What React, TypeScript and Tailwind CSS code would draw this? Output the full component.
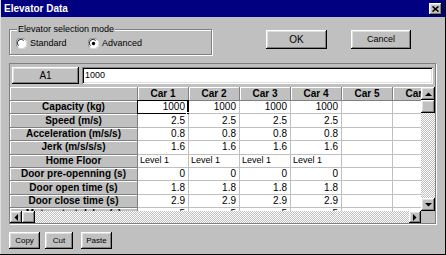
import React from "react";

const raised =
  "bg-[#c0c0c0] shadow-[inset_-1px_-1px_0_#000,inset_1px_1px_0_#fff,inset_-2px_-2px_0_#808080,inset_2px_2px_0_#dfdfdf]";
const sunken =
  "shadow-[inset_1px_1px_0_#808080,inset_-1px_-1px_0_#fff,inset_2px_2px_0_#000,inset_-2px_-2px_0_#dfdfdf]";
const checker =
  "bg-[image:repeating-conic-gradient(#c0c0c0_0%_25%,#ffffff_0%_50%)] bg-[length:2px_2px]";

type Row = { label: string; values: string[]; left?: boolean };

const rows: Row[] = [
  { label: "Capacity (kg)", values: ["1000", "1000", "1000", "1000", "", ""] },
  { label: "Speed (m/s)", values: ["2.5", "2.5", "2.5", "2.5", "", ""] },
  { label: "Acceleration (m/s/s)", values: ["0.8", "0.8", "0.8", "0.8", "", ""] },
  { label: "Jerk (m/s/s/s)", values: ["1.6", "1.6", "1.6", "1.6", "", ""] },
  { label: "Home Floor", values: ["Level 1", "Level 1", "Level 1", "Level 1", "", ""], left: true },
  { label: "Door pre-openning (s)", values: ["0", "0", "0", "0", "", ""] },
  { label: "Door open time (s)", values: ["1.8", "1.8", "1.8", "1.8", "", ""] },
  { label: "Door close time (s)", values: ["2.9", "2.9", "2.9", "2.9", "", ""] },
  { label: "Motor start delay (s)", values: ["5", "5", "5", "5", "", ""] },
];

const cars = ["Car 1", "Car 2", "Car 3", "Car 4", "Car 5", "Car 6"];

function Arrow({ dir }: { dir: "up" | "down" | "left" | "right" }) {
  const pts =
    dir === "up"
      ? "0,4 7,4 3.5,0.5"
      : dir === "down"
      ? "0,0 7,0 3.5,3.5"
      : dir === "left"
      ? "4,0 4,7 0.5,3.5"
      : "0,0 0,7 3.5,3.5";
  const w = dir === "up" || dir === "down" ? 7 : 4;
  const h = dir === "up" || dir === "down" ? 4 : 7;
  return (
    <svg width={w} height={h} viewBox={`0 0 ${w} ${h}`}>
      <polygon points={pts} fill="#000" />
    </svg>
  );
}

function Radio({ checked }: { checked?: boolean }) {
  return (
    <svg width="11" height="11" viewBox="0 0 12 12" className="shrink-0">
      <circle cx="6" cy="6" r="5.5" fill="#ffffff" />
      <path d="M1.5 9.5 A5 5 0 0 1 9.5 1.5" stroke="#808080" strokeWidth="1" fill="none" />
      <path d="M2.6 8.4 A3.6 3.6 0 0 1 8.4 2.6" stroke="#000" strokeWidth="1" fill="none" />
      <path d="M2.5 10.5 A5 5 0 0 0 10.5 2.5" stroke="#dfdfdf" strokeWidth="1" fill="none" />
      {checked && <circle cx="6" cy="6" r="1.8" fill="#000" />}
    </svg>
  );
}

export default function App() {
  return (
    <div className="w-[446px] h-[255px] bg-[#c0c0c0] flex flex-col overflow-hidden text-black font-['Liberation_Sans',Arial,sans-serif] shadow-[inset_-1px_-1px_0_#000,inset_1px_1px_0_#dfdfdf]">
      {/* Title bar */}
      <div className="h-[17px] mx-[1px] shrink-0 bg-[#000080] flex items-center justify-between pl-[3px] pr-[3px]">
        <span className="text-white font-bold text-[10px] leading-none">Elevator Data</span>
        <div className={`w-[13px] h-[12px] ${raised} flex items-center justify-center`}>
          <svg width="7" height="6" viewBox="0 0 7 6">
            <path d="M0.5 0.5 L6.5 5.5 M6.5 0.5 L0.5 5.5" stroke="#000" strokeWidth="1.6" />
          </svg>
        </div>
      </div>

      {/* Mode + buttons */}
      <div className="flex items-start shrink-0">
        <div className="relative ml-[9px] mt-[12px] w-[203px] h-[26px] border border-[#808080] shadow-[1px_1px_0_#fff,inset_1px_1px_0_#fff]">
          <span className="absolute left-[7px] top-[-7px] bg-[#c0c0c0] px-[1px] text-[9px] leading-[12px]">
            Elevator selection mode
          </span>
          <div className="flex items-center pl-[6px] pt-[8px] text-[9px] leading-none">
            <div className="flex items-center gap-[3px] w-[72px]">
              <Radio />
              <span>Standard</span>
            </div>
            <div className="flex items-center gap-[3px]">
              <Radio checked />
              <span>Advanced</span>
            </div>
          </div>
        </div>
        <div className={`ml-[54px] mt-[13px] w-[61px] h-[19px] ${raised} flex items-center justify-center text-[10px]`}>
          OK
        </div>
        <div className={`ml-[24px] mt-[13px] w-[60px] h-[19px] ${raised} flex items-center justify-center text-[9px]`}>
          Cancel
        </div>
      </div>

      {/* Grid panel */}
      <div className="ml-[9px] mt-[8px] w-[427px] h-[161px] shrink-0 border border-[#808080] shadow-[1px_1px_0_#fff] flex flex-col">
        <div className="flex pt-[3px] h-[20px] shrink-0">
          <div className={`ml-[2px] w-[67px] h-[17px] ${raised} flex items-center justify-center text-[10px]`}>A1</div>
          <div className={`ml-[3px] w-[351px] h-[17px] bg-white ${sunken} flex items-center pl-[3px] text-[9px]`}>
            1000
          </div>
        </div>

        <div className="mt-[3px] flex shrink-0">
          <div className="w-[411px] h-[124px] overflow-hidden bg-white flex flex-col">
            {/* header */}
            <div className="flex h-[14px] shrink-0">
              <div className="w-[128px] shrink-0 bg-[#c0c0c0] border-r border-b border-[#808080] shadow-[inset_1px_1px_0_#fff]" />
              {cars.map((c) => (
                <div
                  key={c}
                  className="w-[51px] shrink-0 bg-[#c0c0c0] border-r border-b border-[#808080] shadow-[inset_1px_1px_0_#fff] flex items-center justify-center font-bold text-[10px] leading-none"
                >
                  {c}
                </div>
              ))}
            </div>
            {rows.map((r, ri) => (
              <div key={r.label} className="flex h-[13.4px] shrink-0">
                <div className="w-[128px] shrink-0 bg-[#c0c0c0] border-r border-b border-[#808080] shadow-[inset_1px_1px_0_#fff] flex items-center justify-center font-bold text-[10px] leading-none whitespace-nowrap">
                  {r.label}
                </div>
                {r.values.map((v, ci) => (
                  <div
                    key={ci}
                    className={`relative w-[51px] shrink-0 bg-white border-r border-b border-[#c0c0c0] flex items-center leading-none whitespace-nowrap ${
                      r.left ? "justify-start pl-[2px] text-[9px]" : "justify-end pr-[3px] text-[10px]"
                    }`}
                  >
                    {v}
                    {ri === 0 && ci === 0 && (
                      <>
                        <span className="absolute left-[-1px] top-[-1px] right-[-1px] bottom-[-1px] border border-black border-r-2" />
                        <span className="absolute right-[-2px] bottom-[-3px] w-[4px] h-[4px] bg-black border border-white" />
                      </>
                    )}
                  </div>
                ))}
              </div>
            ))}
          </div>
          {/* vertical scrollbar */}
          <div className="w-[14px] h-[124px] flex flex-col shrink-0">
            <div className={`h-[13px] ${raised} flex items-center justify-center`}>
              <Arrow dir="up" />
            </div>
            <div className={`h-[13px] ${raised}`} />
            <div className={`flex-1 ${checker}`} />
            <div className={`h-[13px] ${raised} flex items-center justify-center`}>
              <Arrow dir="down" />
            </div>
          </div>
        </div>

        {/* horizontal scrollbar */}
        <div className="flex h-[12px] shrink-0">
          <div className="w-[411px] flex">
            <div className={`w-[12px] ${raised} flex items-center justify-center`}>
              <Arrow dir="left" />
            </div>
            <div className={`w-[13px] ${raised}`} />
            <div className={`flex-1 ${checker}`} />
            <div className={`w-[12px] ${raised} flex items-center justify-center`}>
              <Arrow dir="right" />
            </div>
          </div>
          <div className="w-[14px] bg-[#c0c0c0]" />
        </div>
      </div>

      {/* bottom buttons */}
      <div className="flex mt-[8px] ml-[9px] shrink-0">
        <div className={`w-[31px] h-[17px] ${raised} flex items-center justify-center text-[8px]`}>Copy</div>
        <div className={`ml-[5px] w-[28px] h-[17px] ${raised} flex items-center justify-center text-[8px]`}>Cut</div>
        <div className={`ml-[8px] w-[31px] h-[17px] ${raised} flex items-center justify-center text-[8px]`}>Paste</div>
      </div>
    </div>
  );
}
